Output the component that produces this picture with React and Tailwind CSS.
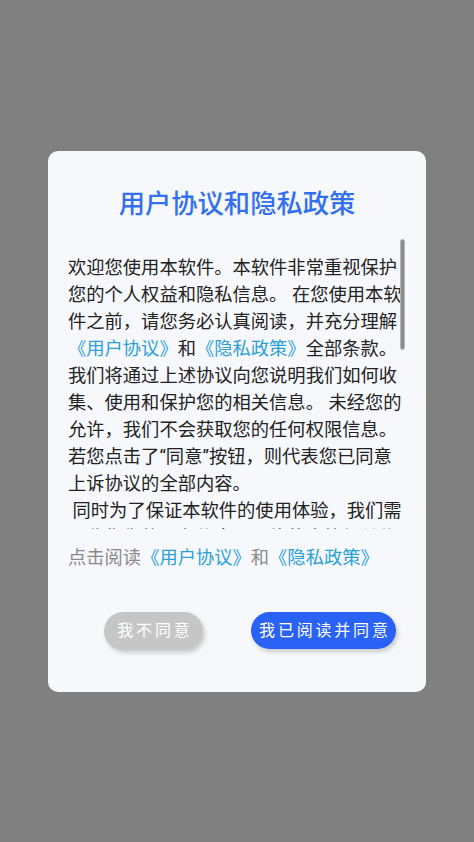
import React from "react";

const FONT = "font-['Roboto','Noto_Sans_CJK_SC',sans-serif]";

function Link({ children }) {
  return <span className="text-[#2aa0d8]">{children}</span>;
}

export default function App() {
  return (
    <div
      className={`min-h-screen w-full bg-[#808080] flex items-center justify-center ${FONT}`}
    >
      <div className="w-[378px] h-[541px] rounded-[10px] bg-[#f7f8fc] flex flex-col">
        {/* Title */}
        <h1 className="pt-[34px] text-center text-[26.3px] leading-[38px] font-medium text-[#3370f0]">
          用户协议和隐私政策
        </h1>

        {/* Scrollable agreement text */}
        <div className="relative mt-[14px] ml-[20px] w-[340px] h-[292px] overflow-hidden">
          <div className="w-[337px] pt-[17px] text-[18.3px] leading-[27px] text-[#222222]">
            <p>
              欢迎您使用本软件。本软件非常重视保护您的个人权益和隐私信息。
              在您使用本软件之前，请您务必认真阅读，并充分理解
              <Link>《用户协议》</Link>和<Link>《隐私政策》</Link>
              全部条款。我们将通过上述协议向您说明我们如何收集、使用和保护您的相关信息。
              未经您的允许，我们不会获取您的任何权限信息。若您点击了“同意”按钮，则代表您已同意上诉协议的全部内容。
            </p>
            <p className="whitespace-pre-wrap">
              {" 同时为了保证本软件的使用体验，我们需要收集您的设备信息、网络状态等相关信息，以便为您提供更好的服务。"}
            </p>
          </div>
          {/* scroll thumb */}
          <div className="absolute left-[332px] top-[2px] w-[5px] h-[111px] rounded-full bg-[#8c8c8c] border border-[#b5b5b5]" />
        </div>

        {/* Footer links */}
        <p className="mt-[15px] ml-[20px] text-[18.3px] leading-[27px] text-[#8a8a8a]">
          点击阅读<Link>《用户协议》</Link>和<Link>《隐私政策》</Link>
        </p>

        {/* Buttons */}
        <div className="mt-[41px] ml-[56px] flex items-center gap-[48px]">
          <button className="w-[99px] h-[38px] rounded-full bg-[#c6c6c6] text-white text-[16px] tracking-[2.8px] pl-[2.8px] shadow-[2px_3px_4px_rgba(0,0,0,0.18)]">
            我不同意
          </button>
          <button className="w-[145px] h-[37px] rounded-full bg-[#2962f5] text-white text-[16px] tracking-[2.8px] pl-[2.8px] shadow-[2px_3px_4px_rgba(0,0,0,0.18)]">
            我已阅读并同意
          </button>
        </div>
      </div>
    </div>
  );
}
